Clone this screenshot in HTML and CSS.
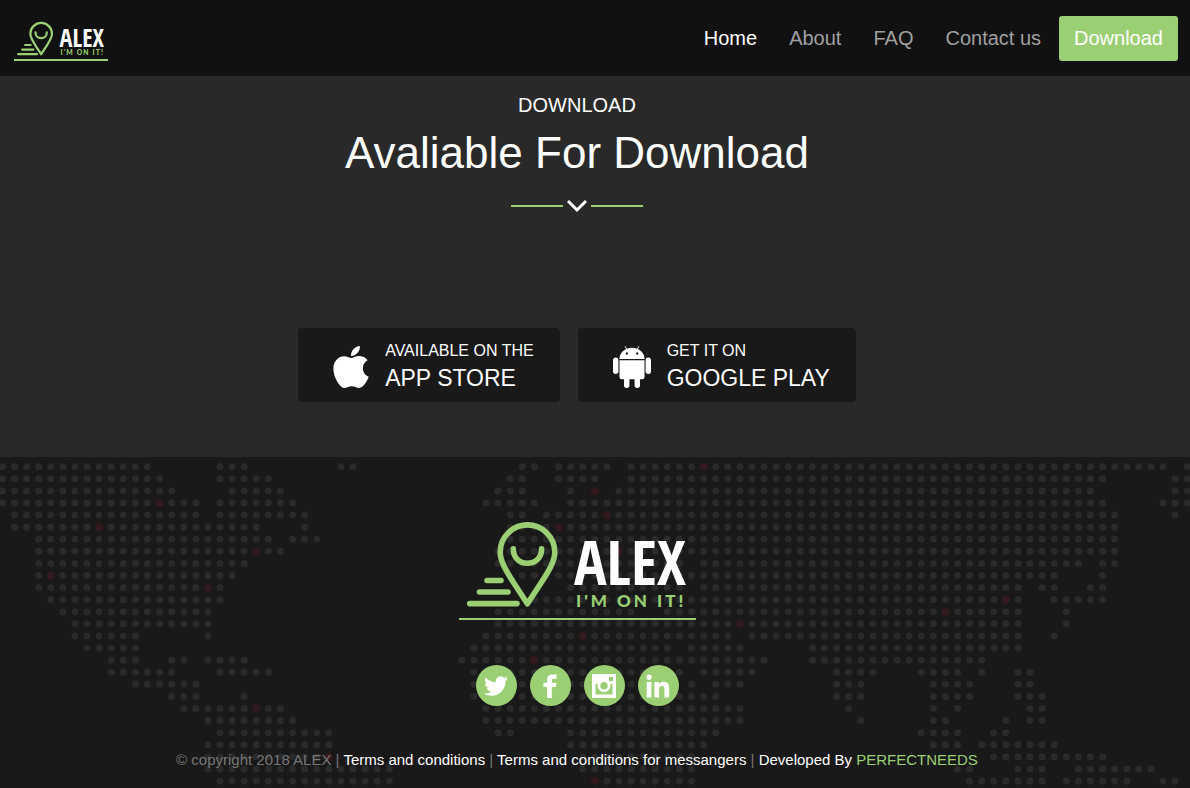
FILE: index.html
```html
<!DOCTYPE html>
<html lang="en">
<head>
    <meta charset="UTF-8">
    <meta name="viewport" content="width=device-width, initial-scale=1">
    <title>ALEX - I'm on it!</title>
    <link rel="stylesheet" href="styles.css">
</head>
<body>
    <svg class="sprite" aria-hidden="true">
        <symbol id="logo" viewBox="0 0 237 98">
            <g class="logo-mark">
                <path d="M68.4 83.8 L54.5 62.5 C48 52 41.2 41.500 41.200 32.200 A27.300 27.300 0 0 1 95.800 32.200 C95.800 41.500 89 52 82.300 62.500 Z"/>
                <path d="M54.300 28.800 C54.300 38 60.500 43.200 68.400 43.200 S82.600 38 82.600 28.800"/>
                <path d="M28 60.500 H42 M20.500 72 H49 M10.700 83.600 H58"/>
            </g>
            <text class="logo-name" x="115" y="65">ALEX</text>
            <text class="logo-tag" x="117" y="87">I'M ON IT!</text>
        </symbol>
    </svg>

    <header class="header">
        <a class="logo logo-small" href="#" aria-label="ALEX">
            <svg viewBox="0 0 237 98"><use href="#logo"/></svg>
        </a>
        <nav class="nav">
            <a class="nav-link active" href="#">Home</a>
            <a class="nav-link" href="#">About</a>
            <a class="nav-link" href="#">FAQ</a>
            <a class="nav-link" href="#">Contact us</a>
            <a class="nav-btn" href="#download">Download</a>
        </nav>
    </header>

    <main class="download" id="download">
        <p class="label">DOWNLOAD</p>
        <h1>Avaliable For Download</h1>
        <div class="divider">
            <span class="line"></span>
            <svg class="chevron" viewBox="0 0 22 14"><path d="M2 2 L11 11 L20 2"/></svg>
            <span class="line"></span>
        </div>
        <div class="stores">
            <a class="store" href="#">
                <svg class="store-icon" viewBox="4 32 376 448"><path d="M318.7 268.7c-.2-36.7 16.4-64.4 50-84.8-18.8-26.9-47.2-41.7-84.7-44.6-35.500-2.800-74.300 20.700-88.500 20.700-15 0-49.400-19.700-76.400-19.700C63.300 141.200 4 184.800 4 273.500q0 39.300 14.400 81.200c12.800 36.700 59 126.700 107.200 125.200 25.200-.6 43-17.900 75.800-17.900 31.800 0 48.300 17.900 76.400 17.900 48.600-.7 90.400-82.500 102.600-119.300-65.200-30.700-61.700-90-61.700-91.900zm-56.600-164.200c27.300-32.400 24.800-61.900 24-72.500-24.100 1.400-52 16.400-67.900 34.900-17.500 19.800-27.800 44.300-25.600 71.900 26.100 2 49.900-11.400 69.500-34.300z"/></svg>
                <span class="store-text">
                    <span class="store-top">AVAILABLE ON THE</span>
                    <span class="store-name">APP STORE</span>
                </span>
            </a>
            <a class="store" href="#">
                <svg class="store-icon android" viewBox="0 0 38 42">
                    <path fill-rule="evenodd" d="M6.500 13 C6.500 8.500 9.300 4.800 13.300 3 L11.600 .4 L12.200 0 L14.100 2.700 C17 1.500 21 1.500 23.900 2.700 L25.800 0 L26.400 .4 L24.700 3 C28.700 4.800 31.500 8.500 31.500 13 Z M13.800 6.300 a1.200 1.200 0 1 0 .1 0 Z M24.200 6.300 a1.200 1.200 0 1 0 .1 0 Z"/>
                    <path d="M6.500 14.300 H31.500 V31 A2.300 2.300 0 0 1 29.200 33.300 H27 V39.200 A2.700 2.700 0 0 1 21.600 39.200 V33.300 H16.400 V39.200 A2.700 2.700 0 0 1 11 39.200 V33.300 H8.800 A2.300 2.300 0 0 1 6.500 31 Z"/>
                    <rect x="0" y="11.500" width="5.400" height="16.500" rx="2.700"/>
                    <rect x="32.600" y="11.500" width="5.400" height="16.500" rx="2.700"/>
                </svg>
                <span class="store-text">
                    <span class="store-top">GET IT ON</span>
                    <span class="store-name">GOOGLE PLAY</span>
                </span>
            </a>
        </div>
    </main>

    <footer class="footer">
        <svg class="map" id="map" aria-hidden="true"></svg>
        <div class="footer-content">
            <a class="logo" href="#" aria-label="ALEX">
                <svg viewBox="0 0 237 98"><use href="#logo"/></svg>
            </a>
            <div class="social">
                <a href="#" aria-label="Twitter">
                    <svg viewBox="0 0 512 512"><path d="M459.370 151.716c.325 4.548.325 9.097.325 13.645 0 138.720-105.583 298.558-298.558 298.558-59.452 0-114.680-17.219-161.137-47.106 8.447.974 16.568 1.299 25.340 1.299 49.055 0 94.213-16.568 130.274-44.832-46.132-.975-84.792-31.188-98.112-72.772 6.498.974 12.995 1.624 19.818 1.624 9.421 0 18.843-1.300 27.614-3.573-48.081-9.747-84.143-51.980-84.143-102.985v-1.299c13.969 7.797 30.214 12.670 47.431 13.319-28.264-18.843-46.781-51.005-46.781-87.391 0-19.492 5.197-37.360 14.294-52.954 51.655 63.675 129.300 105.258 216.365 109.807-1.624-7.797-2.599-15.918-2.599-24.040 0-57.828 46.782-104.934 104.934-104.934 30.213 0 57.502 12.670 76.670 33.137 23.715-4.548 46.456-13.320 66.599-25.340-7.798 24.366-24.366 44.833-46.132 57.827 21.117-2.273 41.584-8.122 60.426-16.243-14.292 20.791-32.161 39.308-52.628 54.253z"/></svg>
                </a>
                <a href="#" aria-label="Facebook">
                    <svg viewBox="0 0 24 24"><path d="M9 24 V13 H5.500 V8.700 H9 V6 C9 2 11.200 .5 14.500 .5 H18.500 V4.700 H15.800 C14.200 4.700 13.800 5.300 13.800 6.600 V8.700 H18.500 L18 13 H13.800 V24 Z"/></svg>
                </a>
                <a href="#" aria-label="Instagram">
                    <svg viewBox="0 0 24 24"><path fill-rule="evenodd" d="M0 0 H24 V24 H0 Z M17 3 V7 H21 V3 Z M3.500 10 V20.500 H20.500 V10 H18.300 A6.500 6.500 0 1 1 5.700 10 Z M12 8 A3.800 3.800 0 1 0 12.010 8 Z"/></svg>
                </a>
                <a href="#" aria-label="LinkedIn">
                    <svg viewBox="14 -10 430 470"><path d="M100.280 448H7.400V148.900h92.880zM53.790 108.100C24.090 108.100 0 83.500 0 53.800a53.790 53.790 0 0 1 107.580 0c0 29.700-24.100 54.300-53.790 54.300zM447.900 448h-92.680V302.400c0-34.700-.7-79.200-48.290-79.200-48.290 0-55.690 37.700-55.690 76.700V448h-92.780V148.900h89.080v40.800h1.300c12.400-23.500 42.690-48.300 87.880-48.300 94 0 111.280 61.900 111.280 142.300V448z"/></svg>
                </a>
            </div>
            <p class="copyright">© copyright 2018 ALEX | <a href="#">Terms and conditions</a> | <a href="#">Terms and conditions for messangers</a> | <a href="#">Developed By <span class="green">PERFECTNEEDS</span></a></p>
        </div>
    </footer>

    <script src="map.js"></script>
</body>
</html>
```
FILE: styles.css
```css
* {
    margin: 0;
    padding: 0;
    box-sizing: border-box;
}
body {
    background: #292929;
    color: #fff;
    font-family: "Liberation Sans", Arial, sans-serif;
    min-height: 100vh;
    display: flex;
    flex-direction: column;
}
a {
    color: inherit;
    text-decoration: none;
}
.sprite {
    display: none;
}

/* logo */
.logo {
    display: block;
    width: 237px;
    border-bottom: 2px solid #9bcf73;
}
.logo svg {
    display: block;
    width: 100%;
    overflow: visible;
}
.logo-small {
    width: 94px;
    margin-top: 6px;
}
.logo-mark {
    fill: none;
    stroke: #9bcf73;
    stroke-width: 5.6;
    stroke-linecap: round;
    stroke-linejoin: round;
}
.logo-name {
    fill: #fff;
    font-family: "Liberation Sans Narrow", "Open Sans Condensed", "Liberation Sans", sans-serif;
    font-weight: bold;
    font-size: 61px;
}
.logo-tag {
    fill: #9bcf73;
    font-family: Lato, sans-serif;
    font-weight: 900;
    font-size: 17px;
    letter-spacing: 3px;
}

/* header */
.header {
    background: #111;
    height: 76px;
    padding: 0 12px 0 14px;
    display: flex;
    align-items: center;
    justify-content: space-between;
}
.nav {
    display: flex;
    align-items: center;
    font-size: 20px;
}
.nav-link {
    padding: 8px 16px;
    color: #a0a0a0;
}
.nav-link.active {
    color: #fff;
}
.nav-btn {
    margin-left: 2px;
    padding: 0 15px;
    line-height: 45px;
    background: #9bcf73;
    border-radius: 3px;
}

/* download */
.download {
    padding: 17px 36px 55px 0;
    text-align: center;
}
.label {
    font-size: 20px;
    line-height: 24px;
}
h1 {
    margin-top: 10px;
    font-size: 44px;
    line-height: 52px;
    font-weight: normal;
}
.divider {
    height: 20px;
    margin-top: 17px;
    display: flex;
    align-items: center;
    justify-content: center;
    gap: 3px;
}
.line {
    width: 52px;
    height: 2px;
    background: #9bcf73;
}
.chevron {
    width: 22px;
    height: 14px;
    fill: none;
    stroke: #fff;
    stroke-width: 3;
}
.stores {
    margin-top: 112px;
    display: flex;
    justify-content: center;
    gap: 18px;
}
.store {
    display: flex;
    align-items: center;
    gap: 16px;
    padding: 10px 26px 10px 35px;
    background: #191919;
    border-radius: 4px;
    text-align: left;
}
.store-icon {
    width: 36px;
    height: 42px;
    margin-top: 3px;
    fill: #fff;
}
.store-icon.android {
    width: 38px;
}
.store-text {
    display: flex;
    flex-direction: column;
}
.store-top {
    font-size: 16px;
    line-height: 26px;
}
.store-name {
    font-size: 23px;
    line-height: 28px;
}

/* footer */
.footer {
    flex: 1;
    position: relative;
    background: #191919;
}
.map {
    position: absolute;
    top: 0;
    left: 0;
    width: 100%;
    height: 100%;
}
.dot {
    fill: #2a2a2a;
}
.dot-red {
    fill: #32191d;
}
.footer-content {
    position: relative;
    padding: 63px 36px 16px 0;
    display: flex;
    flex-direction: column;
    align-items: center;
}
.social {
    margin-top: 45px;
    display: flex;
    gap: 13px;
}
.social a {
    width: 41px;
    height: 41px;
    border-radius: 50%;
    background: #9bcf73;
    display: flex;
    align-items: center;
    justify-content: center;
}
.social svg {
    width: 24px;
    height: 24px;
    fill: #fff;
}
.copyright {
    margin-top: 42px;
    font-size: 15px;
    line-height: 24px;
    color: #777;
    text-align: center;
}
.copyright a {
    color: #fff;
}
.copyright .green {
    color: #9bcf73;
}
```
FILE: map.js
```js
// Dotted world map, one string per row: column ranges that have a dot
const rows = [
    "0-12 18-20 28-29 43-44 46-50 52-96 98",
    "0-13 18-22 42-43 46-49 52-91 97-98",
    "0-14 19-23 41-43 47 49 51-90 97-98",
    "0-16 18-24 40-44 47-91 96-98",
    "1-16 18-25 42-43 45-92 97",
    "1-21 25 42-92",
    "3-22 24-26 42-92",
    "3-23 41-92",
    "3-20 41-56 58-89 91-92",
    "3-19 43-87 91",
    "3-18 47-56 58-84 86-87 90-91",
    "4-18 44-84 87-91",
    "5-17 41-52 55-84 88",
    "6-17 41-84 88",
    "6-11 17 40-60 62-84 87",
    "7-11 39-55 57-61 67-84",
    "9-11 14-15 17-20 38-63 67-81",
    "9-14 18-22 39-56 58-62 69-72 76-79 81 84-85",
    "11-16 39-55 57 59-61 69-71 77-80 84-85",
    "14-16 20 39-59 69-71 77-80 84-86",
    "15-23 40-61 70 77 79 85-86",
    "17-24 40-61 71 77-78 83 85-86",
    "18-27 41-42 47-59 76-79 82-83",
    "17-27 47-58 77-79 81-87",
    "17-27 48-57 82-91",
    "17-32 48-57 79-80 84-86 89-95",
    "18-32 49-57 80-86 88-93 96-97"
];
const reds = ["58,0", "49,2", "13,3", "50,4", "8,5", "46,5", "21,7", "51,7", "4,9", "17,10", "83,11",
    "78,12", "61,13", "48,14", "44,16", "21,20", "27,24", "49,26"];
const pitch = 12.09;

let dots = "";
rows.forEach((row, y) => {
    row.split(" ").forEach(range => {
        let [from, to] = range.split("-").map(Number);
        for (let x = from; x <= (to || from); x++) {
            let red = reds.includes(x + "," + y);
            dots += `<circle class="${red ? "dot-red" : "dot"}" cx="${2.4 + x * pitch}" cy="${9.7 + y * pitch}" r="${red ? 4 : 3.5}"/>`;
        }
    });
});
document.getElementById("map").innerHTML = dots;
```
